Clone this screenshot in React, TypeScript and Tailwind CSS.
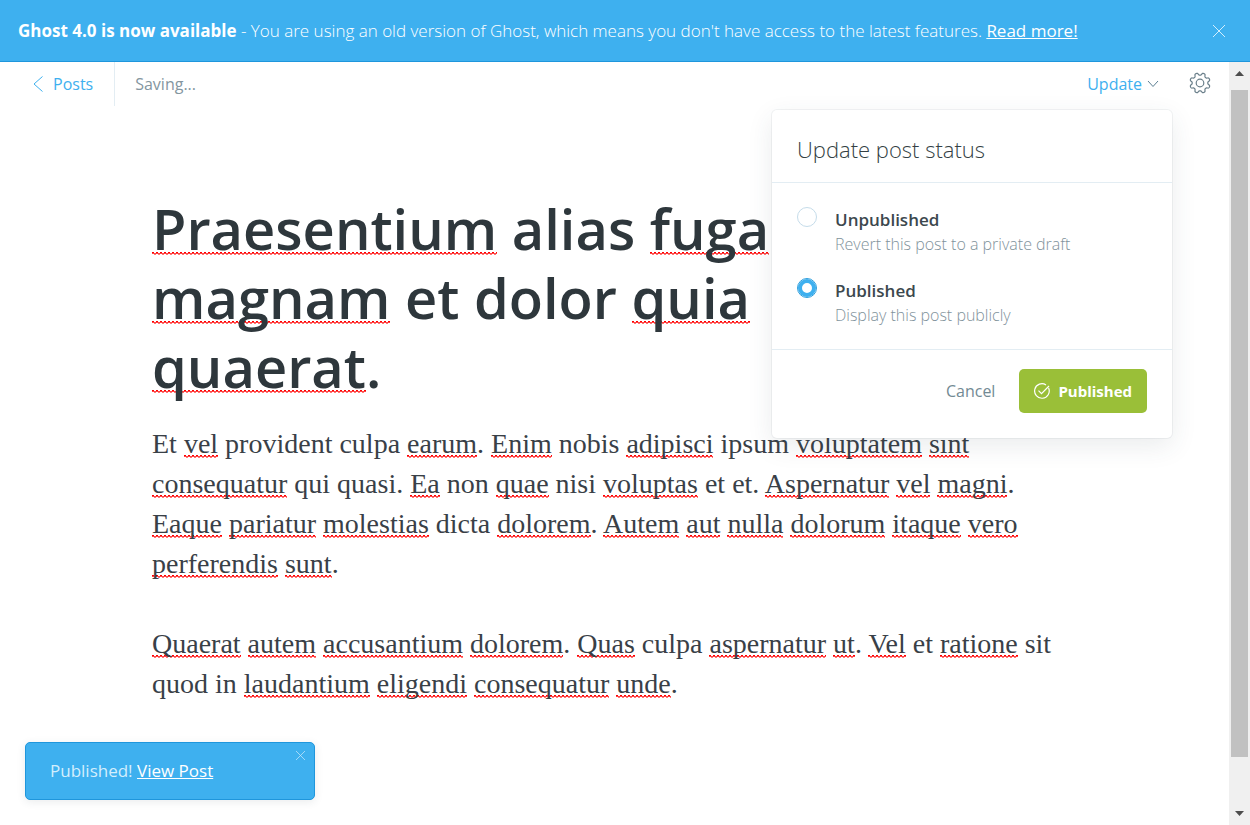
const TITLE = ["[Praesentium] alias [fuga]", "[magnam] et dolor [quia]", "[quaerat]."];

const PARAGRAPHS = [
  [
    "Et [vel] provident culpa [earum]. [Enim] nobis [adipisci] ipsum [voluptatem] [sint]",
    "[consequatur] qui quasi. [Ea] non [quae] nisi [voluptas] et et. [Aspernatur] [vel] [magni].",
    "[Eaque] [pariatur] [molestias] dicta [dolorem]. [Autem] [aut] [nulla] [dolorum] [itaque] [vero]",
    "[perferendis] [sunt].",
  ],
  [
    "[Quaerat] [autem] [accusantium] [dolorem]. [Quas] culpa [aspernatur] [ut]. [Vel] et [ratione] sit",
    "quod in [laudantium] [eligendi] [consequatur] [unde].",
  ],
];

const SQUIGGLE =
  "bg-[linear-gradient(90deg,#f00_50%,transparent_50%),linear-gradient(90deg,#f00b,#f00b),linear-gradient(90deg,transparent_50%,#f008_50%)] bg-[length:4px_1px] bg-repeat-x";
const TITLE_SQUIGGLE = "[background-position:0_calc(100%-13px),0_calc(100%-12px),0_calc(100%-11px)]";
const BODY_SQUIGGLE = "[background-position:0_calc(100%-3px),0_calc(100%-2px),0_calc(100%-1px)]";

/* Words in square brackets get the spell checker's underline. */
function Line({ text, squiggle }: { text: string; squiggle: string }) {
  return (
    <span className="block whitespace-nowrap">
      {text.split(/(\[[^\]]+\])/).map((part, i) =>
        part.startsWith("[") ? (
          <span key={i} className={`${SQUIGGLE} ${squiggle}`}>
            {part.slice(1, -1)}
          </span>
        ) : (
          part
        ),
      )}
    </span>
  );
}

function Cross({ className }: { className: string }) {
  return (
    <svg viewBox="0 0 12 12" className={className} fill="none" stroke="currentColor" aria-hidden="true">
      <path d="M0 0 12 12M12 0 0 12" />
    </svg>
  );
}

/* Eight rounded teeth, with a notch at the top, bottom and both sides. */
const GEAR_POINTS = Array.from({ length: 160 }, (_, i) => {
  const angle = (i / 160) * Math.PI * 2;
  const wave = Math.tanh(-1.8 * Math.cos(angle * 8)) / Math.tanh(1.8);
  const radius = 9 + 1.2 * wave;
  return `${(11 + radius * Math.cos(angle)).toFixed(2)},${(11 + radius * Math.sin(angle)).toFixed(2)}`;
}).join(" ");

function Gear() {
  return (
    <svg viewBox="0 0 22 22" className="size-[22px]" fill="none" stroke="currentColor" strokeWidth="1.2" strokeLinejoin="round" aria-hidden="true">
      <circle cx="11" cy="11" r="3.8" />
      <polygon points={GEAR_POINTS} />
    </svg>
  );
}

function StatusOption({ id, title, hint, checked }: { id: string; title: string; hint: string; checked?: boolean }) {
  return (
    <div className="flex gap-[18px]">
      <input
        type="radio"
        name="status"
        id={id}
        defaultChecked={checked}
        className="size-5 shrink-0 appearance-none rounded-full border border-[#c5dcea] bg-white checked:border-[#2c9edd] checked:shadow-[inset_0_0_0_4px_#3eb0ef]"
      />
      <label htmlFor={id} className="block pt-px">
        <span className="block text-[17px] leading-6 font-semibold text-[#3c484e]">{title}</span>
        <span className="block text-[16px] leading-6 font-light text-[#7f929b]">{hint}</span>
      </label>
    </div>
  );
}

export default function App() {
  return (
    <div className="flex h-screen flex-col overflow-hidden bg-white font-['Open_Sans',sans-serif] text-[#394047]">
      <aside className="flex h-[62px] shrink-0 items-center justify-between border-b border-[#1f96dc] bg-[#3eb0ef] pr-[25px] pl-[18px] text-[17px] whitespace-nowrap text-white">
        <p>
          <b className="font-bold">Ghost 4.0 is now available</b>
          <span className="font-light">
            {" "}
            - You are using an old version of Ghost, which means you don't have access to the latest features.{" "}
          </span>
          <a href="#release" className="underline">
            Read more!
          </a>
        </p>
        <button type="button" aria-label="Close banner" className="text-[#d3eefd]">
          <Cross className="size-3" />
        </button>
      </aside>

      <div className="relative flex min-h-0 flex-1">
        <main className="min-w-0 flex-1">
          <header className="flex h-11 items-center justify-between pr-[18px] text-[16px]">
            <div className="flex h-full items-center">
              <a href="#posts" className="flex h-full items-center gap-[10px] border-r border-[#e3edf3] pr-[21px] pl-[33px] text-[#3eb0ef]">
                <svg viewBox="0 0 10 16" className="h-4 w-[10px]" fill="none" stroke="currentColor" aria-hidden="true">
                  <path d="M9.5 .5 1 8l8.500 7.500" />
                </svg>
                Posts
              </a>
              <span className="pl-5 text-[#8496a0]">Saving...</span>
            </div>
            <div className="flex items-center gap-[30px]">
              <button type="button" className="flex items-center gap-[5px] text-[#3eb0ef]">
                Update
                <svg viewBox="0 0 12 8" className="h-2 w-3 text-[#5c7f93]" fill="none" stroke="currentColor" aria-hidden="true">
                  <path d="M1 1l5 5.500 5-5.500" />
                </svg>
              </button>
              <button type="button" aria-label="Post settings" className="pb-[2px] text-[#6a7f8a]">
                <Gear />
              </button>
            </div>
          </header>

          <article className="pt-[88px] pl-[152px]">
            <h1 className="text-[56px] leading-[69px] font-semibold text-[#2e373c]">
              {TITLE.map((line) => (
                <Line key={line} text={line} squiggle={TITLE_SQUIGGLE} />
              ))}
            </h1>
            <div className="mt-[23px] flex flex-col gap-10 font-['Liberation_Serif',serif] text-[28px] leading-10 text-[#394047]">
              {PARAGRAPHS.map((lines) => (
                <p key={lines[0]}>
                  {lines.map((line) => (
                    <Line key={line} text={line} squiggle={BODY_SQUIGGLE} />
                  ))}
                </p>
              ))}
            </div>
          </article>
        </main>

        <div className="flex w-[21px] shrink-0 flex-col items-center bg-[#f0f0f0]" aria-hidden="true">
          <svg viewBox="0 0 21 28" className="h-7 w-[21px]" fill="#4d4d4d">
            <path d="M6 14h9L10.500 9z" />
          </svg>
          <div className="min-h-0 w-[17px] flex-1 bg-[#c1c1c1]" />
          <svg viewBox="0 0 21 68" className="h-[68px] w-[21px]" fill="#4d4d4d">
            <path d="M6 54h9L10.500 59z" />
          </svg>
        </div>

        <section className="absolute top-12 right-[78px] w-[400px] rounded-[5px] bg-white shadow-[0_0_0_1px_rgba(50,70,80,0.06),0_8px_26px_rgba(50,70,80,0.1)]">
          <h2 className="border-b border-[#e3edf3] px-[25px] pt-[23px] pb-[17px] text-[22px] leading-8 font-light text-[#343f44]">
            Update post status
          </h2>
          <div className="flex flex-col gap-[22px] px-[25px] pt-6 pb-[22px]">
            <StatusOption id="unpublished" title="Unpublished" hint="Revert this post to a private draft" />
            <StatusOption id="published" title="Published" hint="Display this post publicly" checked />
          </div>
          <footer className="flex items-center justify-end gap-6 border-t border-[#e3edf3] px-[25px] pt-[19px] pb-[25px]">
            <button type="button" className="text-[16px] text-[#738a94]">
              Cancel
            </button>
            <button type="button" className="flex h-11 items-center gap-2 rounded-[5px] bg-[#9abf38] px-[15px] text-[15px] font-bold text-white">
              <svg viewBox="0 0 16 16" className="size-4" fill="none" stroke="currentColor" strokeWidth="1.2" aria-hidden="true">
                <path d="M14.600 5A7.300 7.300 0 1 1 12 1.900M4.500 7.700l3 3L15 3" />
              </svg>
              Published
            </button>
          </footer>
        </section>

        <div className="absolute bottom-[25px] left-[25px] flex w-[290px] items-start justify-between rounded-[5px] border border-[#1f96dc] bg-[#3eb0ef] py-2 pr-[9px] pl-6 text-[17px] shadow-[0_2px_8px_rgba(50,70,80,0.1)]" role="status">
          <p className="py-2 leading-6 text-[#d3eefd]">
            Published!{" "}
            <a href="#view" className="text-white underline">
              View Post
            </a>
          </p>
          <button type="button" aria-label="Dismiss" className="text-[#c5e7fb]">
            <Cross className="size-[9px]" />
          </button>
        </div>
      </div>
    </div>
  );
}
